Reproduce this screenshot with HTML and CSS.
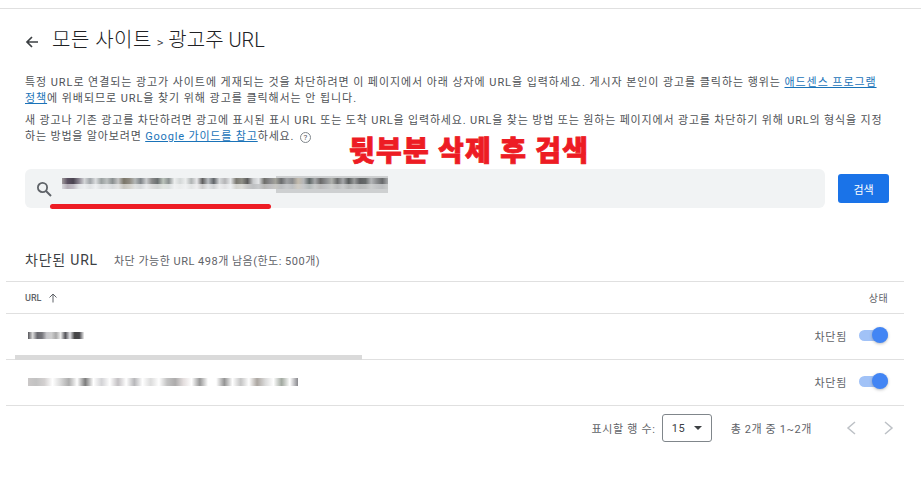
FILE: index.html
```html
<!DOCTYPE html>
<html lang="ko">
<head>
  <meta charset="UTF-8">
  <meta name="viewport" content="width=device-width, initial-scale=1.0">
  <title>광고주 URL</title>
  <link rel="stylesheet" href="styles.css">
</head>
<body>
  <div class="page">
    <header class="title-row">
      <svg class="back-icon" width="16" height="16" viewBox="0 0 16 16"><path d="M14 8H3M8 3 3 8l5 5" fill="none" stroke="#3c4043" stroke-width="1.7"/></svg>
      <h1><span class="crumb">모든 사이트</span> <span class="sep">&gt;</span> 광고주 URL</h1>
    </header>

    <section class="intro">
      <p class="intro-first">특정 URL로 연결되는 광고가 사이트에 게재되는 것을 차단하려면 이 페이지에서 아래 상자에 URL을 입력하세요. 게시자 본인이 광고를 클릭하는 행위는 <a href="#">애드센스 프로그램 정책</a>에 위배되므로 URL을 찾기 위해 광고를 클릭해서는 안 됩니다.</p>
      <p class="intro-second">새 광고나 기존 광고를 차단하려면 광고에 표시된 표시 URL 또는 도착 URL을 입력하세요. URL을 찾는 방법 또는 원하는 페이지에서 광고를 차단하기 위해 URL의 형식을 지정하는 방법을 알아보려면 <a href="#">Google 가이드를 참고</a>하세요. <span class="help">?</span></p>
    </section>

    <div class="notice">뒷부분 삭제 후 검색</div>

    <div class="search-row">
      <div class="search-box">
        <svg width="18" height="18" viewBox="0 0 18 18"><circle cx="7.500" cy="7.500" r="4.600" fill="none" stroke="#5f6368" stroke-width="1.800"/><path d="m11 11 5 5" stroke="#5f6368" stroke-width="2"/></svg>
        <div class="search-grey"></div>
        <div class="search-blur"></div>
        <div class="red-line"></div>
      </div>
      <button class="search-btn">검색</button>
    </div>

    <div class="table-head">
      <h2>차단된 URL</h2>
      <span class="quota">차단 가능한 URL 498개 남음(한도: 500개)</span>
    </div>

    <div class="table">
      <div class="row header-row">
        <div class="url-col">URL <svg width="10" height="10" viewBox="0 0 10 10"><path d="M5 9.500V1M1.500 4.500 5 1l3.500 3.500" fill="none" stroke="#5f6368"/></svg></div>
        <div class="state-head">상태</div>
      </div>
      <div class="row">
        <div class="short-blur"></div>
        <div class="state">차단됨<span class="toggle"></span></div>
        <div class="scroll-bar"></div>
      </div>
      <div class="row">
        <div class="long-blur"></div>
        <div class="state">차단됨<span class="toggle"></span></div>
      </div>
    </div>

    <footer class="pager">
      <span>표시할 행 수:</span>
      <div class="select">15<span class="caret"></span></div>
      <span class="count">총 2개 중 1~2개</span>
      <div class="arrows">
        <svg width="12" height="16" viewBox="0 0 12 16"><path d="M10 2 3 8l7 6" fill="none" stroke="#bdc1c6" stroke-width="1.500"/></svg>
        <svg width="12" height="16" viewBox="0 0 12 16"><path d="m2 2 7 6-7 6" fill="none" stroke="#bdc1c6" stroke-width="1.500"/></svg>
      </div>
    </footer>
  </div>
</body>
</html>
```

FILE: styles.css
```css
* {
  margin: 0;
  padding: 0;
  box-sizing: border-box;
}

body, html {
  height: 100%;
  background-color: #fff;
  color: #3c4043;
  font-family: 'Roboto', 'Noto Sans CJK KR', sans-serif;
  overflow: hidden;
}

.page {
  position: relative;
  margin-top: 8px;
  border-top: 1px solid #e0e0e0;
  height: 490px;
}

.title-row {
  display: flex;
  align-items: center;
  gap: 12px;
  padding: 3px 0 0 24px;
  height: 62px;
}

.title-row h1 {
  font-size: 20px;
  font-weight: 300;
  color: #202124;
  line-height: 30px;
}

.crumb {
  letter-spacing: 0.5px;
}

.sep {
  font-size: 13px;
}

.intro {
  padding: 4px 33px 0 25px;
  font-size: 11px;
  line-height: 16px;
  color: #505357;
}

.intro p {
  margin-bottom: 6px;
}

.intro-first {
  letter-spacing: 0.93px;
}

.intro-second {
  letter-spacing: 0.83px;
}

.intro a {
  color: #1a73b8;
}

.help {
  display: inline-block;
  width: 11px;
  height: 11px;
  margin-left: 2px;
  border: 1px solid #80868b;
  border-radius: 50%;
  font-size: 8px;
  line-height: 9px;
  text-align: center;
  letter-spacing: 0;
}

/* 빨간 안내 문구, 위에 덧그림 */
.notice {
  position: absolute;
  left: 349px;
  top: 124px;
  font-size: 28px;
  line-height: 38px;
  font-weight: 900;
  letter-spacing: 1.2px;
  color: #ed1c24;
  -webkit-text-stroke: 0.8px #ed1c24;
  white-space: nowrap;
}

.search-row {
  display: flex;
  align-items: center;
  gap: 13px;
  margin: 24px 32px 0 25px;
}

.search-box {
  position: relative;
  flex: 1;
  display: flex;
  align-items: center;
  height: 39px;
  padding-left: 10px;
  background-color: #f1f3f4;
  border-radius: 6px;
}

.search-grey {
  position: absolute;
  left: 251px;
  top: 7px;
  width: 112px;
  height: 17px;
  background-color: #ced0d1;
  box-shadow: -1px 21px 0 -20px #c4c6c8;
}

.search-blur {
  position: absolute;
  left: 37px;
  top: 9px;
  width: 326px;
  height: 11px;
  background-repeat: no-repeat;
  background-size: 100% 6px, 100% 5px;
  background-position: 0 0, 0 6px;
  background-image:
    linear-gradient(90deg, #a09a9c, #5a5060, #4a4450, #8a8490, #d4d6d8, #a0a4a8, #dcdee0, #9aa0a0, #bcc0c0, #8a8f90, #c6c6c6, #7a7568, #8f8a80, #b4b8b8, #7f8488, #ccced0, #8a8a8a, #6a6f70, #bcc4bc, #8a9090, #eceeee, #d4d8d8, #eceeee, #b0b4b4, #e8e8ea, #606060, #bcc0c4, #606468, #d8dadc, #b4b4b6, #e6e8ea, #7a7870, #909088, #5c5c5c, #c8cacc, #e4e6e8, #6e6e6a, #8a8a8c, #a4a49c, #6a6c6e, #a0a2a4, #8a8c8e, #c4bcae, #b4b6b8, #5e6666, #a6a8aa, #6a6a6a, #8c8e90, #b0b2ae, #6a6c6c, #a6a8aa, #585c5c, #9a9c9c, #5e6062, #666a6a, #b4b6b8, #8a8c8e, #686a6c, #a8aaac),
    linear-gradient(90deg, #d8d8dc, #b4aeb6, #c0bcc4, #e4e6e8, #eceef0, #e0e2e4, #eef0f2, #dcdee0, #e4e6e8, #d8dadc, #e4e4e4, #c8c6c0, #d4d2cc, #e0e2e2, #d6d8da, #eaecee, #dcdcdc, #d2d4d4, #e0e4e0, #dce0e0, #eff1f2, #eaecec, #eff1f2, #e2e4e4, #eeeeef, #cccccc, #e4e6e8, #d0d2d4, #ecedee, #e2e2e4, #eef0f2, #d4d4d0, #dcdcd8, #c8c8c8, #bec0c2, #c8cacc, #b8b8b6, #c0c0c2, #c8c8c4, #bcbec0, #c8cacc, #bec0c2, #d0ccc4, #c6c8ca, #b4baba, #cacccc, #bcbcbc, #c2c4c6, #cccecc, #bcbebe, #cacccc, #b6b8b8, #c4c6c6, #b8baba, #bcbebe, #cccece, #c2c4c6, #bcbec0, #cacccc);
}

.red-line {
  position: absolute;
  left: 25px;
  top: 35px;
  width: 221px;
  height: 5px;
  border-radius: 3px;
  background-color: #ed1c24;
}

.search-btn {
  width: 51px;
  height: 29px;
  border: 0;
  border-radius: 3px;
  background-color: #1a73e8;
  color: #fff;
  font-family: inherit;
  font-size: 11px;
}

.table-head {
  display: flex;
  align-items: baseline;
  gap: 16px;
  margin: 41px 0 0 25px;
  height: 32px;
}

.table-head h2 {
  font-size: 14px;
  font-weight: 400;
  color: #3c4043;
  letter-spacing: 0.8px;
}

.quota {
  font-size: 11px;
  letter-spacing: 0.5px;
  color: #5f6368;
}

.table {
  margin: 0 17px 0 6px;
  border-top: 1px solid #e0e0e0;
}

.row {
  position: relative;
  display: flex;
  align-items: center;
  justify-content: space-between;
  height: 46px;
  padding: 0 16px 2px 22px;
  border-bottom: 1px solid #e0e0e0;
}

.header-row {
  height: 32px;
  padding: 0 16px 0 19px;
}

.url-col {
  display: flex;
  align-items: center;
  gap: 7px;
  font-size: 9px;
  font-weight: 500;
  color: #5f6368;
}

.state-head {
  font-size: 10px;
  letter-spacing: 0.4px;
  color: #5f6368;
}

.short-blur {
  width: 56px;
  height: 7px;
  background-image: linear-gradient(90deg, #55555a, #dcdcdc, #6a6a70, #77777c, #c8c8cc, #cfcfcf, #a8a8a8, #eee, #55555a, #e4e4e8, #444, #48484c, #eee);
}

.long-blur {
  width: 270px;
  height: 8px;
  opacity: 0.7;
  background-image: linear-gradient(90deg, #b4b0b0, #a8a8a8, #c0bcbc, #fff, #c8c8c8, #888, #fff, #444, #fff, #c0c0c4, #fff, #a8a4a8, #fff, #98989c, #fff, #ccc, #fff, #a8a8a8, #8a8888, #d8d0d0, #fff, #6a6a6a, #fff, #fff, #666, #fff, #aaa, #fff, #888078, #ccc, #fff, #7a8478, #fff, #55555c);
}

.state {
  display: flex;
  align-items: center;
  gap: 12px;
  font-size: 11px;
  letter-spacing: 0.7px;
  color: #5f6368;
}

.toggle {
  position: relative;
  display: inline-block;
  width: 29px;
  height: 11px;
  border-radius: 6px;
  background-color: #a1c2f7;
}

.toggle::after {
  content: "";
  position: absolute;
  right: 0;
  top: -3px;
  width: 16px;
  height: 16px;
  border-radius: 50%;
  background-color: #4285f4;
  box-shadow: 0 1px 3px rgba(60, 64, 67, 0.35);
}

.scroll-bar {
  position: absolute;
  left: 9px;
  bottom: -1px;
  width: 347px;
  height: 5px;
  background-color: #dadada;
}

.pager {
  display: flex;
  align-items: center;
  justify-content: flex-end;
  height: 44px;
  padding-right: 26px;
  font-size: 11px;
  letter-spacing: 0.7px;
  color: #5f6368;
}

.select {
  display: flex;
  align-items: center;
  justify-content: space-between;
  width: 50px;
  height: 28px;
  margin: 0 19px 0 6px;
  padding: 0 9px;
  border: 1px solid #80868b;
  border-radius: 3px;
  color: #3c4043;
}

.caret {
  border-left: 4px solid transparent;
  border-right: 4px solid transparent;
  border-top: 4px solid #3c4043;
}

.count {
  letter-spacing: 0.6px;
}

.arrows {
  display: flex;
  gap: 26px;
  margin-left: 33px;
}
```
